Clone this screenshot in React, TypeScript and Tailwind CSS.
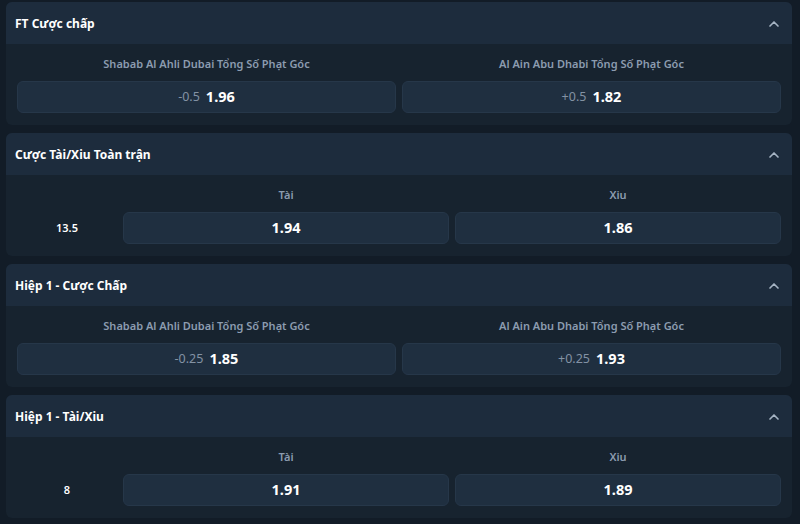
import { ChevronUp } from 'lucide-react';

type Pair = { label: string; line?: string; odds: string };

type Market =
    | { kind: 'handicap'; title: string; items: Pair[] }
    | { kind: 'total'; title: string; line: string; items: Pair[] };

const markets: Market[] = [
    {
        kind: 'handicap',
        title: 'FT Cược chấp',
        items: [
            { label: 'Shabab Al Ahli Dubai Tổng Số Phạt Góc', line: '-0.5', odds: '1.96' },
            { label: 'Al Ain Abu Dhabi Tổng Số Phạt Góc', line: '+0.5', odds: '1.82' },
        ],
    },
    {
        kind: 'total',
        title: 'Cược Tài/Xiu Toàn trận',
        line: '13.5',
        items: [
            { label: 'Tài', odds: '1.94' },
            { label: 'Xiu', odds: '1.86' },
        ],
    },
    {
        kind: 'handicap',
        title: 'Hiệp 1 - Cược Chấp',
        items: [
            { label: 'Shabab Al Ahli Dubai Tổng Số Phạt Góc', line: '-0.25', odds: '1.85' },
            { label: 'Al Ain Abu Dhabi Tổng Số Phạt Góc', line: '+0.25', odds: '1.93' },
        ],
    },
    {
        kind: 'total',
        title: 'Hiệp 1 - Tài/Xiu',
        line: '8',
        items: [
            { label: 'Tài', odds: '1.91' },
            { label: 'Xiu', odds: '1.89' },
        ],
    },
];

function OddsButton({ item }: { item: Pair }) {
    return (
        <button className="h-8 w-full flex items-center justify-center gap-[6px] rounded-md bg-[#1f2f40] border border-[#263749] hover:bg-[#26384b]">
            {item.line && <span className="text-[12.5px] text-[#8392a4]">{item.line}</span>}
            <span className="text-[14.5px] font-bold text-white">{item.odds}</span>
        </button>
    );
}

function Label({ text }: { text: string }) {
    return <div className="h-4 mb-[9px] text-center text-[11px] leading-4 font-semibold text-[#8c9cb0]">{text}</div>;
}

function MarketCard({ market }: { market: Market }) {
    return (
        <div className="rounded-md overflow-hidden bg-[#17232f]">
            {/* Header */}
            <div className="h-[42px] flex items-center justify-between pl-[9px] pr-[10px] pt-[2px] bg-[#1d2c3d]">
                <span className="text-[12px] font-bold text-white">{market.title}</span>
                <ChevronUp className="w-4 h-4 text-[#a6b4c4]" strokeWidth={2.5} />
            </div>

            {/* Body */}
            <div className="px-[11px] pt-3 pb-3">
                {market.kind === 'handicap' ? (
                    <div className="grid grid-cols-2 gap-[6px]">
                        {market.items.map((item) => (
                            <div key={item.label}>
                                <Label text={item.label} />
                                <OddsButton item={item} />
                            </div>
                        ))}
                    </div>
                ) : (
                    <div className="grid grid-cols-[100px_1fr_1fr] gap-x-[6px]">
                        <div className="flex items-end justify-center">
                            <span className="h-8 flex items-center text-[11px] font-semibold text-white">{market.line}</span>
                        </div>
                        {market.items.map((item) => (
                            <div key={item.label}>
                                <Label text={item.label} />
                                <OddsButton item={{ label: item.label, odds: item.odds }} />
                            </div>
                        ))}
                    </div>
                )}
            </div>
        </div>
    );
}

export default function App() {
    return (
        <div
            className="w-[800px] h-[524px] overflow-hidden bg-[#121c27] pt-[2px] pl-[6px] pr-[8px] flex flex-col gap-2"
            style={{ fontFamily: '"Noto Sans", "Open Sans", sans-serif' }}
        >
            {markets.map((m) => (
                <MarketCard key={m.title} market={m} />
            ))}
        </div>
    );
}
